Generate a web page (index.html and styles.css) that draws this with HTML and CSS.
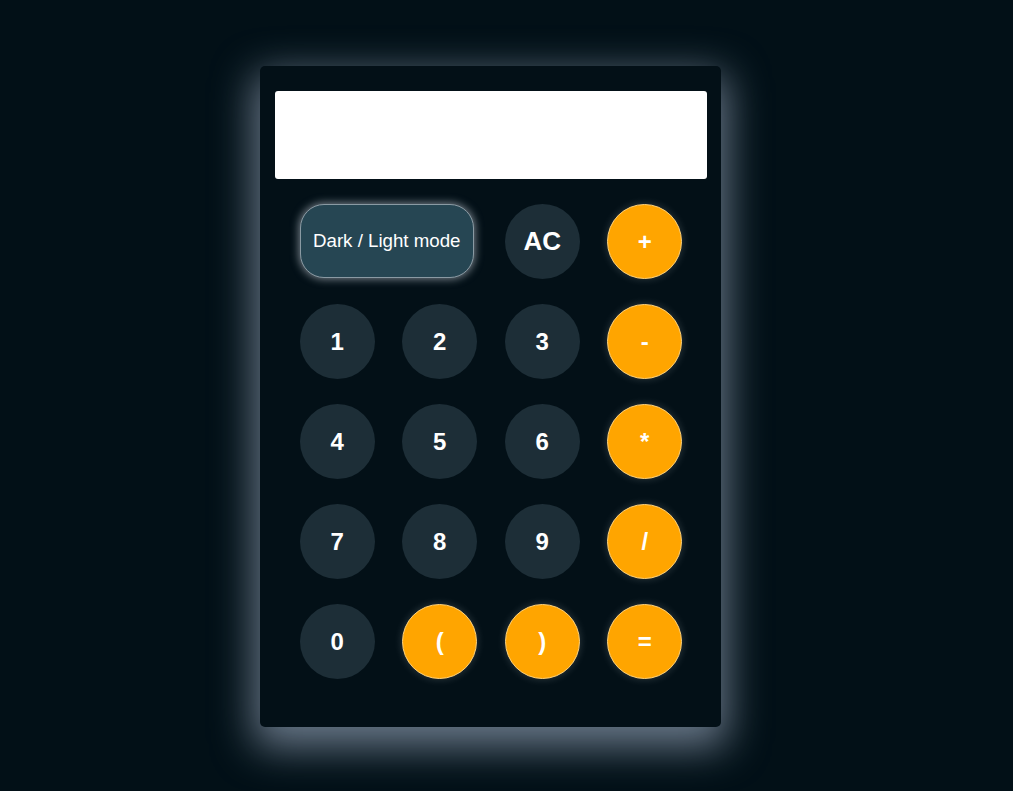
FILE: index.html
```html
<!DOCTYPE html>
<html lang="en">
<head>
<meta charset="utf-8">
<title>Calculator</title>
<link rel="stylesheet" href="styles.css">
</head>
<body>
<div class="calculator">
  <div class="display"></div>
  <div class="keys">
    <button class="toggle">Dark / Light mode</button>
    <button class="key ac">AC</button>
    <button class="key op">+</button>
    <button class="key">1</button>
    <button class="key">2</button>
    <button class="key">3</button>
    <button class="key op">-</button>
    <button class="key">4</button>
    <button class="key">5</button>
    <button class="key">6</button>
    <button class="key op">*</button>
    <button class="key">7</button>
    <button class="key">8</button>
    <button class="key">9</button>
    <button class="key op">/</button>
    <button class="key">0</button>
    <button class="key op">(</button>
    <button class="key op">)</button>
    <button class="key op">=</button>
  </div>
</div>
</body>
</html>
```
FILE: styles.css
```css
html, body {
  margin: 0;
  height: 100%;
}
body {
  background: #021017;
  font-family: "Liberation Sans", Arial, sans-serif;
  display: flex;
  justify-content: flex-start;
  align-items: flex-start;
  padding: 66px 0 0 260px;
  box-sizing: border-box;
}
.calculator {
  width: 461px;
  height: 661px;
  box-sizing: border-box;
  background: #031017;
  border-radius: 5px;
  padding: 25px 14px 0 15px;
  box-shadow: 0 14px 40px 6px rgba(140, 155, 175, 0.75);
}
.display {
  height: 88px;
  background: #ffffff;
  border-radius: 3px;
}
.keys {
  display: grid;
  grid-template-columns: repeat(4, 75px);
  grid-auto-rows: 75px;
  column-gap: 27.5px;
  row-gap: 25px;
  justify-content: center;
  margin-top: 25px;
}
button {
  font-family: inherit;
  border: none;
  color: #ffffff;
  cursor: pointer;
}
.toggle {
  grid-column: span 2;
  width: 174px;
  height: 74px;
  border-radius: 24px;
  background: #264653;
  border: 1px solid #8a9aa3;
  font-size: 18.7px;
  padding: 0;
  box-shadow: 0 0 8px 1px rgba(220, 230, 240, 0.55);
}
.key {
  width: 75px;
  height: 75px;
  border-radius: 50%;
  background: #1d2e37;
  font-size: 24px;
  font-weight: bold;
  padding: 0;
}
.key.ac {
  font-size: 26px;
}
.key.op {
  background: #ffa500;
  border: 1px solid #ffd27a;
  box-shadow: 0 0 8px rgba(255, 255, 255, 0.18);
}
```
